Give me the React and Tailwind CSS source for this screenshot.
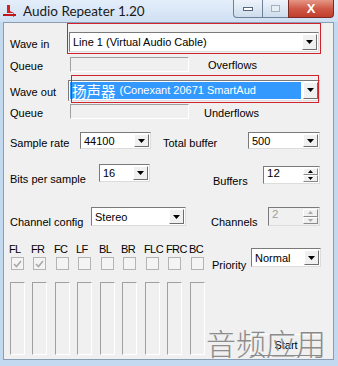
import React from 'react';

const UI = "font-['Liberation_Sans','Noto_Sans_CJK_SC',sans-serif]";

function Arrow({ color = '#000' }) {
  return (
    <svg width="7" height="4" viewBox="0 0 7 4">
      <polygon points="0,0 7,0 3.5,4" fill={color} />
    </svg>
  );
}

function DropButton() {
  return (
    <div className="m-[1px] flex w-[15px] shrink-0 items-center justify-center border border-t-white border-l-white border-r-[#6e6e6e] border-b-[#6e6e6e] bg-[#f0f0f0]">
      <Arrow />
    </div>
  );
}

function Combo({ w, h, children, selected, className = '' }) {
  return (
    <div
      className={`flex shrink-0 border border-t-[#7a7a7a] border-l-[#7a7a7a] border-r-[#dcdcdc] border-b-[#dcdcdc] bg-white ${w} ${h} ${className}`}
    >
      <div className="flex min-w-0 flex-1 items-center p-[1px]">
        <span
          className={`flex h-full flex-1 items-center whitespace-nowrap pl-[2px] text-[11px] leading-[14px] font-['Liberation_Sans_Narrow','Liberation_Sans',sans-serif] ${
            selected ? 'bg-[#3399ff] text-white' : 'text-black'
          }`}
        >
          {children}
        </span>
      </div>
      <DropButton />
    </div>
  );
}

function Spin({ w, h, text, disabled, className = '' }) {
  const c = disabled ? '#a8a8a8' : '#000';
  return (
    <div
      className={`flex shrink-0 border border-t-[#7a7a7a] border-l-[#7a7a7a] border-r-[#dcdcdc] border-b-[#dcdcdc] ${
        disabled ? 'bg-[#f0f0f0]' : 'bg-white'
      } ${w} ${h} ${className}`}
    >
      <span
        className={`flex-1 pl-[3px] pt-[1px] text-[11.5px] leading-none font-['Liberation_Sans_Narrow','Liberation_Sans',sans-serif] ${
          disabled ? 'text-[#a0a0a0]' : 'text-black'
        }`}
      >
        {text}
      </span>
      <div className="m-[1px] flex w-[15px] flex-col">
        <div className="flex flex-1 items-center justify-center border border-t-white border-l-white border-r-[#8a8a8a] border-b-[#8a8a8a] bg-[#f0f0f0]">
          <svg width="5" height="3" viewBox="0 0 5 3">
            <polygon points="0,3 5,3 2.5,0" fill={c} />
          </svg>
        </div>
        <div className="flex flex-1 items-center justify-center border border-t-white border-l-white border-r-[#8a8a8a] border-b-[#8a8a8a] bg-[#f0f0f0]">
          <svg width="5" height="3" viewBox="0 0 5 3">
            <polygon points="0,0 5,0 2.5,3" fill={c} />
          </svg>
        </div>
      </div>
    </div>
  );
}

function Sunken({ className = '' }) {
  return (
    <div
      className={`shrink-0 border border-t-[#a0a0a0] border-l-[#a0a0a0] border-r-white border-b-white bg-[#f0f0f0] ${className}`}
    />
  );
}

function Label({ children, className = '' }) {
  return <span className={`shrink-0 whitespace-nowrap text-[11px] leading-[14px] text-black ${className}`}>{children}</span>;
}

function Check({ checked }) {
  return (
    <div className="flex h-[13px] w-[13px] items-center justify-center border border-[#b4b4b4] bg-[#f4f4f4]">
      {checked && (
        <svg width="9" height="8" viewBox="0 0 9 8">
          <polyline points="1,4 3.5,6.5 8,1" fill="none" stroke="#a9a9a9" strokeWidth="1.6" />
        </svg>
      )}
    </div>
  );
}

const channels = [
  { name: 'FL', w: 'w-[22px]', on: true },
  { name: 'FR', w: 'w-[23px]', on: true },
  { name: 'FC', w: 'w-[22px]' },
  { name: 'LF', w: 'w-[23px]' },
  { name: 'BL', w: 'w-[22px]' },
  { name: 'BR', w: 'w-[23px]' },
  { name: 'FLC', w: 'w-[22px]' },
  { name: 'FRC', w: 'w-[23px]' },
  { name: 'BC', w: 'w-[22px]' },
];

function TitleBar() {
  return (
    <div className="flex h-[22px] shrink-0 items-start bg-gradient-to-b from-[#e4eefa] to-[#cfe0f3]">
      <svg width="14" height="14" viewBox="0 0 14 14" className="ml-[3px] mt-[4px]">
        <polygon points="4,1 7,1 7,7 11,9 4,9" fill="#d42020" />
        <rect x="0" y="10" width="13" height="2" fill="#c01818" />
        <polygon points="10,9 13,11 10,13" fill="#c01818" />
      </svg>
      <span className="ml-[6px] mt-[3px] text-[13.5px] leading-[16px] text-[#1a1a1a] font-['Lato',sans-serif]">
        Audio Repeater 1.20
      </span>
      <div className="ml-auto mr-[4px] flex h-[18px]">
        <div className="flex w-[29px] items-center justify-center rounded-bl-[4px] border border-r-0 border-t-0 border-[#6f819a] bg-gradient-to-b from-[#eef3fa] to-[#cddcec]">
          <div className="h-[4px] w-[10px] border border-[#56667c] bg-white" />
        </div>
        <div className="flex w-[26px] items-center justify-center border border-r-0 border-t-0 border-[#6f819a] bg-gradient-to-b from-[#eef3fa] to-[#cddcec]">
          <div className="h-[7px] w-[9px] border border-[#a2b0c2] bg-[#e8eef6]" />
        </div>
        <div className="flex w-[46px] items-center justify-center rounded-br-[4px] border border-t-0 border-[#7a2a22] bg-gradient-to-b from-[#e59686] via-[#cf5a48] to-[#c23d2c]">
          <span className="text-[13px] font-bold leading-none text-white font-['Liberation_Sans',sans-serif]">X</span>
        </div>
      </div>
    </div>
  );
}

export default function App() {
  return (
    <div className={`flex h-[366px] w-[338px] flex-col overflow-hidden bg-[#c3d9f0] ${UI}`}>
      <TitleBar />
      <div className="relative ml-[3px] h-[338px] w-[331px] shrink-0 border border-[#8b9db5] bg-[#f0f0f0]">
        <div className="flex flex-col pl-[6px]">
          {/* Wave in */}
          <div className="mt-[9px] flex h-[20px] items-center">
            <Label className="mt-[3px] w-[59px]">Wave in</Label>
            <div className="relative">
              <Combo w="w-[250px]" h="h-[20px]">Line 1 (Virtual Audio Cable)</Combo>
              <div className="pointer-events-none absolute -left-[2px] -top-[9px] -right-[2px] -bottom-[2px] border-[1.5px] border-[#d0232e]" />
            </div>
          </div>
          {/* Queue */}
          <div className="mt-[5px] flex h-[15px] items-center">
            <Label className="mt-[3px] w-[60px]">Queue</Label>
            <Sunken className="h-[15px] w-[119px]" />
            <Label className="ml-[19px]">Overflows</Label>
          </div>
          {/* Wave out */}
          <div className="mt-[8px] flex h-[20px] items-center">
            <Label className="mt-[3px] w-[58px]">Wave out</Label>
            <div className="relative">
              <Combo w="w-[252px]" h="h-[21px]" selected>
                <span className="mr-[4px] text-[14.5px] leading-[15px] font-['Noto_Sans_CJK_SC',sans-serif]">扬声器</span>
                (Conexant 20671 SmartAud
              </Combo>
              <div className="pointer-events-none absolute left-[3px] -top-[5px] right-[1px] -bottom-[2px] border-[1.5px] border-[#d0232e]" />
            </div>
          </div>
          {/* Queue */}
          <div className="mt-[4px] flex h-[15px] items-center">
            <Label className="mt-[3px] w-[60px]">Queue</Label>
            <Sunken className="h-[15px] w-[119px]" />
            <Label className="ml-[15px] mt-[3px]">Underflows</Label>
          </div>
          {/* Sample rate / Total buffer */}
          <div className="mt-[13px] flex items-start">
            <Label className="mt-[4px] w-[70px]">Sample rate</Label>
            <Combo w="w-[71px]" h="h-[17px]">44100</Combo>
            <Label className="ml-[12px] mt-[4px] w-[85px]">Total buffer</Label>
            <Combo w="w-[72px]" h="h-[17px]">500</Combo>
          </div>
          {/* Bits per sample / Buffers */}
          <div className="mt-[14px] flex items-start">
            <Label className="mt-[8px] w-[89px]">Bits per sample</Label>
            <Combo w="w-[51px]" h="h-[18px]">16</Combo>
            <Label className="ml-[63px] mt-[10px] w-[50px]">Buffers</Label>
            <Spin w="w-[57px]" h="h-[18px]" text="12" className="mt-[2px]" />
          </div>
          {/* Channel config / Channels */}
          <div className="mt-[19px] flex items-start">
            <Label className="mt-[8px] w-[81px]">Channel config</Label>
            <Combo w="w-[95px]" h="h-[19px]">Stereo</Combo>
            <Label className="ml-[25px] mt-[8px] w-[57px]">Channels</Label>
            <Spin w="w-[52px]" h="h-[19px]" text="2" disabled />
          </div>
          {/* Channels grid + priority + start */}
          <div className="mt-[13px] flex items-start">
            <div className="flex">
              {channels.map((c) => (
                <div key={c.name} className={`flex flex-col ${c.w}`}>
                  <Label className="-ml-[1px] text-[10.5px] leading-[13px] tracking-[-0.6px]">{c.name}</Label>
                  <div className="mt-[1px] pl-[1px]">
                    <Check checked={c.on} />
                  </div>
                  <Sunken className="mt-[12px] h-[73px] w-[15px] bg-[#f0f0f0]" />
                </div>
              ))}
            </div>
            <div className="flex flex-col pt-[6px]">
              <div className="flex items-start">
                <Label className="mt-[10px] w-[39px]">Priority</Label>
                <Combo w="w-[70px]" h="h-[19px]">Normal</Combo>
              </div>
              <div className="ml-[38px] mt-[62px] flex h-[22px] w-[72px] items-center justify-center border border-t-white border-l-white border-r-[#8a8a8a] border-b-[#8a8a8a] bg-[#f0f0f0] text-[11px] text-black">
                Start
              </div>
            </div>
          </div>
        </div>
        <div className="pointer-events-none absolute bottom-[2px] right-[7px] text-[30px] font-light leading-none text-[#8c8c8c] font-['Noto_Sans_CJK_SC',sans-serif]">
          音频应用
        </div>
      </div>
    </div>
  );
}
